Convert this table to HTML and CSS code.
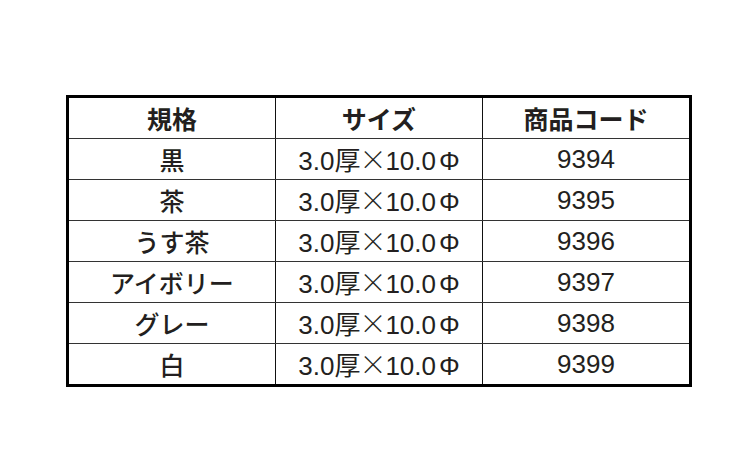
FILE: index.html
```html
<!DOCTYPE html>
<html lang="ja">
<head>
<meta charset="utf-8">
<link rel="stylesheet" href="styles.css">
</head>
<body>
<table class="spec">
  <thead>
    <tr><th>規格</th><th>サイズ</th><th>商品コード</th></tr>
  </thead>
  <tbody>
    <tr><td class="jp">黒</td><td>3.0厚<span class="x">×</span>10.0<span class="phi">Φ</span></td><td>9394</td></tr>
    <tr><td class="jp">茶</td><td>3.0厚<span class="x">×</span>10.0<span class="phi">Φ</span></td><td>9395</td></tr>
    <tr><td class="jp">うす茶</td><td>3.0厚<span class="x">×</span>10.0<span class="phi">Φ</span></td><td>9396</td></tr>
    <tr><td class="jp">アイボリー</td><td>3.0厚<span class="x">×</span>10.0<span class="phi">Φ</span></td><td>9397</td></tr>
    <tr><td class="jp">グレー</td><td>3.0厚<span class="x">×</span>10.0<span class="phi">Φ</span></td><td>9398</td></tr>
    <tr><td class="jp">白</td><td>3.0厚<span class="x">×</span>10.0<span class="phi">Φ</span></td><td>9399</td></tr>
  </tbody>
</table>
</body>
</html>
```
FILE: styles.css
```css
html, body {
  margin: 0;
  padding: 0;
  background: #fff;
}
body {
  padding: 95px 0 0 66px;
  font-family: "Liberation Sans", "Noto Sans CJK JP", sans-serif;
  color: #231f20;
}
.spec {
  border-collapse: collapse;
  table-layout: fixed;
  width: 624px;
  border: 3px solid #000;
}
.spec th,
.spec td {
  width: 206px;
  height: 40px;
  padding: 0;
  text-align: center;
  vertical-align: middle;
  border-left: 1.5px solid #111;
  border-right: 1.5px solid #111;
  border-top: 1.5px solid #333;
  border-bottom: 1.5px solid #333;
  font-size: 26px;
  line-height: 1;
}
.spec th {
  font-family: "Noto Sans CJK JP", sans-serif;
  font-weight: 700;
  font-size: 25px;
}
.spec td.jp {
  font-family: "Noto Sans CJK JP", sans-serif;
  font-weight: 500;
  font-size: 25px;
}
.x {
  font-family: "Noto Sans CJK JP", sans-serif;
  font-weight: 300;
  font-size: 27px;
  margin: 0 -1px;
}
.phi {
  font-family: "Liberation Sans", sans-serif;
  font-size: 26px;
  margin-left: 3px;
}
```
